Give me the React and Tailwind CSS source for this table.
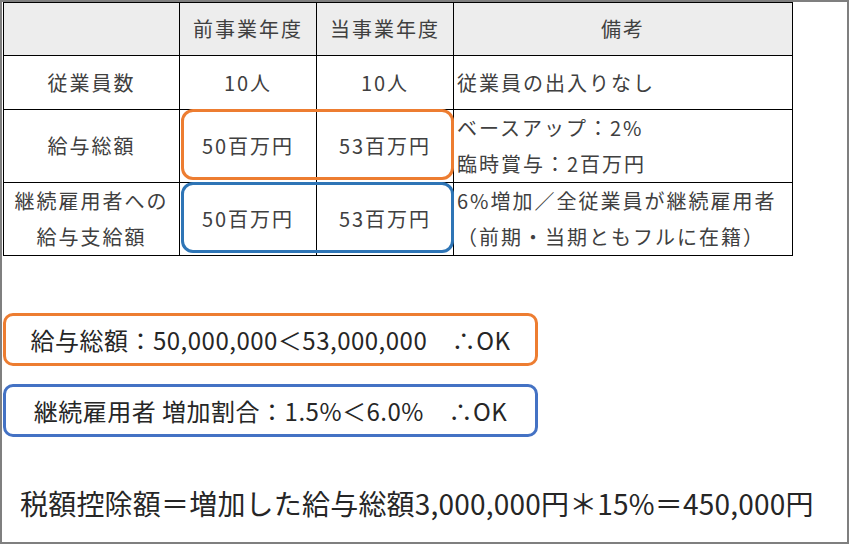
export default function App() {
  const font = { fontFamily: '"Noto Sans CJK JP", "Noto Sans", sans-serif' };
  return (
    <div className="w-[851px] h-[545px] bg-white" style={font}>
      <div className="w-[849px] h-[544px] border-2 border-[#7f7f7f] flex flex-col">
        <div className="relative ml-[1px] w-[790px]">
          <table className="border-collapse text-[#404040] text-[20px] tracking-[2px] leading-[36px]">
            <tbody>
              <tr className="h-[53px] bg-[#ededed]">
                <td className="w-[176px] border border-black"></td>
                <td className="w-[137px] border border-black text-center">前事業年度</td>
                <td className="w-[137px] border border-black text-center">当事業年度</td>
                <td className="w-[339px] border border-black text-center">備考</td>
              </tr>
              <tr className="h-[54px] bg-white">
                <td className="border border-black text-center">従業員数</td>
                <td className="border border-black text-center">10人</td>
                <td className="border border-black text-center">10人</td>
                <td className="border border-black pl-[3px]">従業員の出入りなし</td>
              </tr>
              <tr className="h-[73px] bg-white">
                <td className="border border-black text-center">給与総額</td>
                <td className="border border-black text-center">50百万円</td>
                <td className="border border-black text-center">53百万円</td>
                <td className="border border-black pl-[3px]">
                  <div>ベースアップ：2%</div>
                  <div>臨時賞与：2百万円</div>
                </td>
              </tr>
              <tr className="h-[72px] bg-white">
                <td className="border border-black text-center">
                  <div>継続雇用者への</div>
                  <div>給与支給額</div>
                </td>
                <td className="border border-black text-center">50百万円</td>
                <td className="border border-black text-center">53百万円</td>
                <td className="border border-black pl-[3px]">
                  <div>6%増加／全従業員が継続雇用者</div>
                  <div>（前期・当期ともフルに在籍）</div>
                </td>
              </tr>
            </tbody>
          </table>
          <div className="absolute left-[178px] top-[107px] w-[273px] h-[71px] border-[3px] border-[#ed7d31] rounded-[12px]"></div>
          <div className="absolute left-[178px] top-[180px] w-[273px] h-[71px] border-[3px] border-[#2e75b6] rounded-[12px]"></div>
        </div>

        <div className="mt-[57px] ml-[1px] w-[535px] h-[53px] border-[3px] border-[#ed7d31] rounded-[10px] flex items-center justify-center text-[24px] text-[#262626] tracking-[0.5px]">
          給与総額：50,000,000＜53,000,000　∴OK
        </div>
        <div className="mt-[18px] ml-[1px] w-[535px] h-[53px] border-[3px] border-[#4472c4] rounded-[10px] flex items-center justify-center text-[24px] text-[#262626] tracking-[0.5px]">
          継続雇用者 増加割合：1.5%＜6.0%　∴OK
        </div>

        <div className="mt-[48px] pl-[18px] text-[28px] text-[#262626] leading-[36px] tracking-[0.2px]">
          税額控除額＝増加した給与総額3,000,000円＊15%＝450,000円
        </div>
      </div>
    </div>
  );
}
